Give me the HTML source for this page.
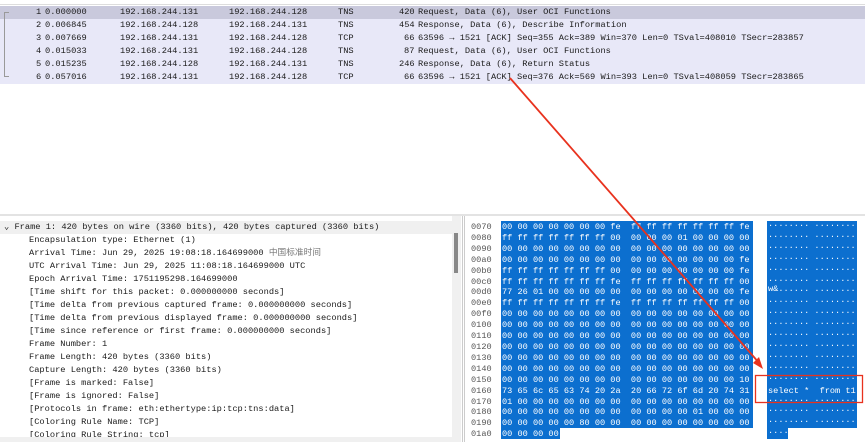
<!DOCTYPE html>
<html><head><meta charset="utf-8"><style>
*{margin:0;padding:0;box-sizing:border-box}
body{width:865px;height:442px;overflow:hidden;background:#fff;position:relative;font-family:"Liberation Mono","Noto Sans CJK SC",monospace;font-size:8.7px;color:#1a1a1a}
.hdr{position:absolute;top:0;left:0;width:865px;height:5px;background:#fff;border-bottom:1px solid #ddd}
.row{position:absolute;left:0;width:865px;height:13px;background:#e8e8f8;line-height:13px;white-space:pre}
.row.sel{background:#c9c9dc}
.row span{position:absolute}
.tree{position:absolute;left:4px;top:12px;width:9px;height:65px;border-left:1px solid #999}
.tree:before{content:"";position:absolute;left:0;top:0;width:4px;border-top:1px solid #999}
.tree:after{content:"";position:absolute;left:0;bottom:0;width:4px;border-top:1px solid #999}
.split{position:absolute;top:214px;left:0;width:865px;height:2px;background:#e3e3e3}
.det{position:absolute;left:0;top:216px;width:452px;height:226px}
.dl{position:absolute;left:29px;white-space:pre;line-height:13px}
.sb{position:absolute;left:452px;top:216px;width:9px;height:226px;background:#f0f0f0}
.thumb{position:absolute;left:454px;top:233px;width:4px;height:40px;background:#888}
.sep{position:absolute;left:462px;top:216px;width:3px;height:226px;border-left:1px solid #ccc;border-right:1px solid #ccc}
.hx{position:absolute;white-space:pre;line-height:10.9px;font-size:8.6px;font-family:"Liberation Mono",monospace}
.off{left:471px;top:222px;color:#555}
.blue{position:absolute;background:#0c6fcf}
</style></head><body>
<div class="hdr"></div>
<div class="row sel" style="top:6px"><span style="left:36px">1</span><span style="left:45px">0.000000</span><span style="left:120px">192.168.244.131</span><span style="left:229px">192.168.244.128</span><span style="left:338px">TNS</span><span style="left:399px">420</span><span style="left:418px">Request, Data (6), User OCI Functions</span></div>
<div class="row" style="top:19px"><span style="left:36px">2</span><span style="left:45px">0.006845</span><span style="left:120px">192.168.244.128</span><span style="left:229px">192.168.244.131</span><span style="left:338px">TNS</span><span style="left:399px">454</span><span style="left:418px">Response, Data (6), Describe Information</span></div>
<div class="row" style="top:32px"><span style="left:36px">3</span><span style="left:45px">0.007669</span><span style="left:120px">192.168.244.131</span><span style="left:229px">192.168.244.128</span><span style="left:338px">TCP</span><span style="left:404px">66</span><span style="left:418px">63596 → 1521 [ACK] Seq=355 Ack=389 Win=370 Len=0 TSval=408010 TSecr=283857</span></div>
<div class="row" style="top:45px"><span style="left:36px">4</span><span style="left:45px">0.015033</span><span style="left:120px">192.168.244.131</span><span style="left:229px">192.168.244.128</span><span style="left:338px">TNS</span><span style="left:404px">87</span><span style="left:418px">Request, Data (6), User OCI Functions</span></div>
<div class="row" style="top:58px"><span style="left:36px">5</span><span style="left:45px">0.015235</span><span style="left:120px">192.168.244.128</span><span style="left:229px">192.168.244.131</span><span style="left:338px">TNS</span><span style="left:399px">246</span><span style="left:418px">Response, Data (6), Return Status</span></div>
<div class="row" style="top:71px"><span style="left:36px">6</span><span style="left:45px">0.057016</span><span style="left:120px">192.168.244.131</span><span style="left:229px">192.168.244.128</span><span style="left:338px">TCP</span><span style="left:404px">66</span><span style="left:418px">63596 → 1521 [ACK] Seq=376 Ack=569 Win=393 Len=0 TSval=408059 TSecr=283865</span></div>
<div class="tree"></div>

<div class="split"></div>
<div class="det">
<div style="position:absolute;left:0;top:5px;width:452px;height:13px;background:#f0f0f0"></div>
<div class="dl" style="left:4px;top:5px">⌄ Frame 1: 420 bytes on wire (3360 bits), 420 bytes captured (3360 bits)</div>
<div class="dl" style="top:18px">Encapsulation type: Ethernet (1)
Arrival Time: Jun 29, 2025 19:08:18.164699000 <span style="color:#777">中国标准时间</span>
UTC Arrival Time: Jun 29, 2025 11:08:18.164699000 UTC
Epoch Arrival Time: 1751195298.164699000
[Time shift for this packet: 0.000000000 seconds]
[Time delta from previous captured frame: 0.000000000 seconds]
[Time delta from previous displayed frame: 0.000000000 seconds]
[Time since reference or first frame: 0.000000000 seconds]
Frame Number: 1
Frame Length: 420 bytes (3360 bits)
Capture Length: 420 bytes (3360 bits)
[Frame is marked: False]
[Frame is ignored: False]
[Protocols in frame: eth:ethertype:ip:tcp:tns:data]
[Coloring Rule Name: TCP]
[Coloring Rule String: tcp]</div>
<div style="position:absolute;left:0;top:221px;width:452px;height:5px;background:#f0f0f0"></div>
</div>
<div class="sb"></div><div class="thumb"></div>
<div class="sep"></div>

<div class="hx off">0070
0080
0090
00a0
00b0
00c0
00d0
00e0
00f0
0100
0110
0120
0130
0140
0150
0160
0170
0180
0190
01a0</div>
<div class="blue" style="left:501px;top:221px;width:252px;height:207px"></div>
<div class="blue" style="left:501px;top:428px;width:59px;height:11px"></div>
<div class="blue" style="left:767px;top:221px;width:90px;height:207px"></div>
<div class="blue" style="left:767px;top:428px;width:21px;height:11px"></div>
<div class="hx" style="left:502px;top:222px;color:#fff">00 00 00 00 00 00 00 fe  ff ff ff ff ff ff ff fe
ff ff ff ff ff ff ff 00  00 00 00 01 00 00 00 00
00 00 00 00 00 00 00 00  00 00 00 00 00 00 00 00
00 00 00 00 00 00 00 00  00 00 00 00 00 00 00 fe
ff ff ff ff ff ff ff 00  00 00 00 00 00 00 00 fe
ff ff ff ff ff ff ff fe  ff ff ff ff ff ff ff 00
77 26 01 00 00 00 00 00  00 00 00 00 00 00 00 fe
ff ff ff ff ff ff ff fe  ff ff ff ff ff ff ff 00
00 00 00 00 00 00 00 00  00 00 00 00 00 00 00 00
00 00 00 00 00 00 00 00  00 00 00 00 00 00 00 00
00 00 00 00 00 00 00 00  00 00 00 00 00 00 00 00
00 00 00 00 00 00 00 00  00 00 00 00 00 00 00 00
00 00 00 00 00 00 00 00  00 00 00 00 00 00 00 00
00 00 00 00 00 00 00 00  00 00 00 00 00 00 00 00
00 00 00 00 00 00 00 00  00 00 00 00 00 00 00 10
73 65 6c 65 63 74 20 2a  20 66 72 6f 6d 20 74 31
01 00 00 00 00 00 00 00  00 00 00 00 00 00 00 00
00 00 00 00 00 00 00 00  00 00 00 00 01 00 00 00
00 00 00 00 00 80 00 00  00 00 00 00 00 00 00 00
00 00 00 00</div>
<div class="hx" style="left:768px;top:219px;color:#fff">........ ........
........ ........
........ ........
........ ........
........ ........
........ ........
w&amp;...... ........
........ ........
........ ........
........ ........
........ ........
........ ........
........ ........
........ ........
........ ........
<span style="position:relative;top:3px">select *  from t1</span>
........ ........
........ ........
........ ........
....</div>
<svg style="position:absolute;left:0;top:0" width="865" height="442">
<line x1="510" y1="78" x2="760" y2="364" stroke="#e8321e" stroke-width="1.8"/>
<polygon points="763,369 753,363 759,357" fill="#e8321e"/>
<rect x="755.5" y="375.5" width="107" height="27" fill="none" stroke="#e8321e" stroke-width="1.3"/>
</svg>
</body></html>
